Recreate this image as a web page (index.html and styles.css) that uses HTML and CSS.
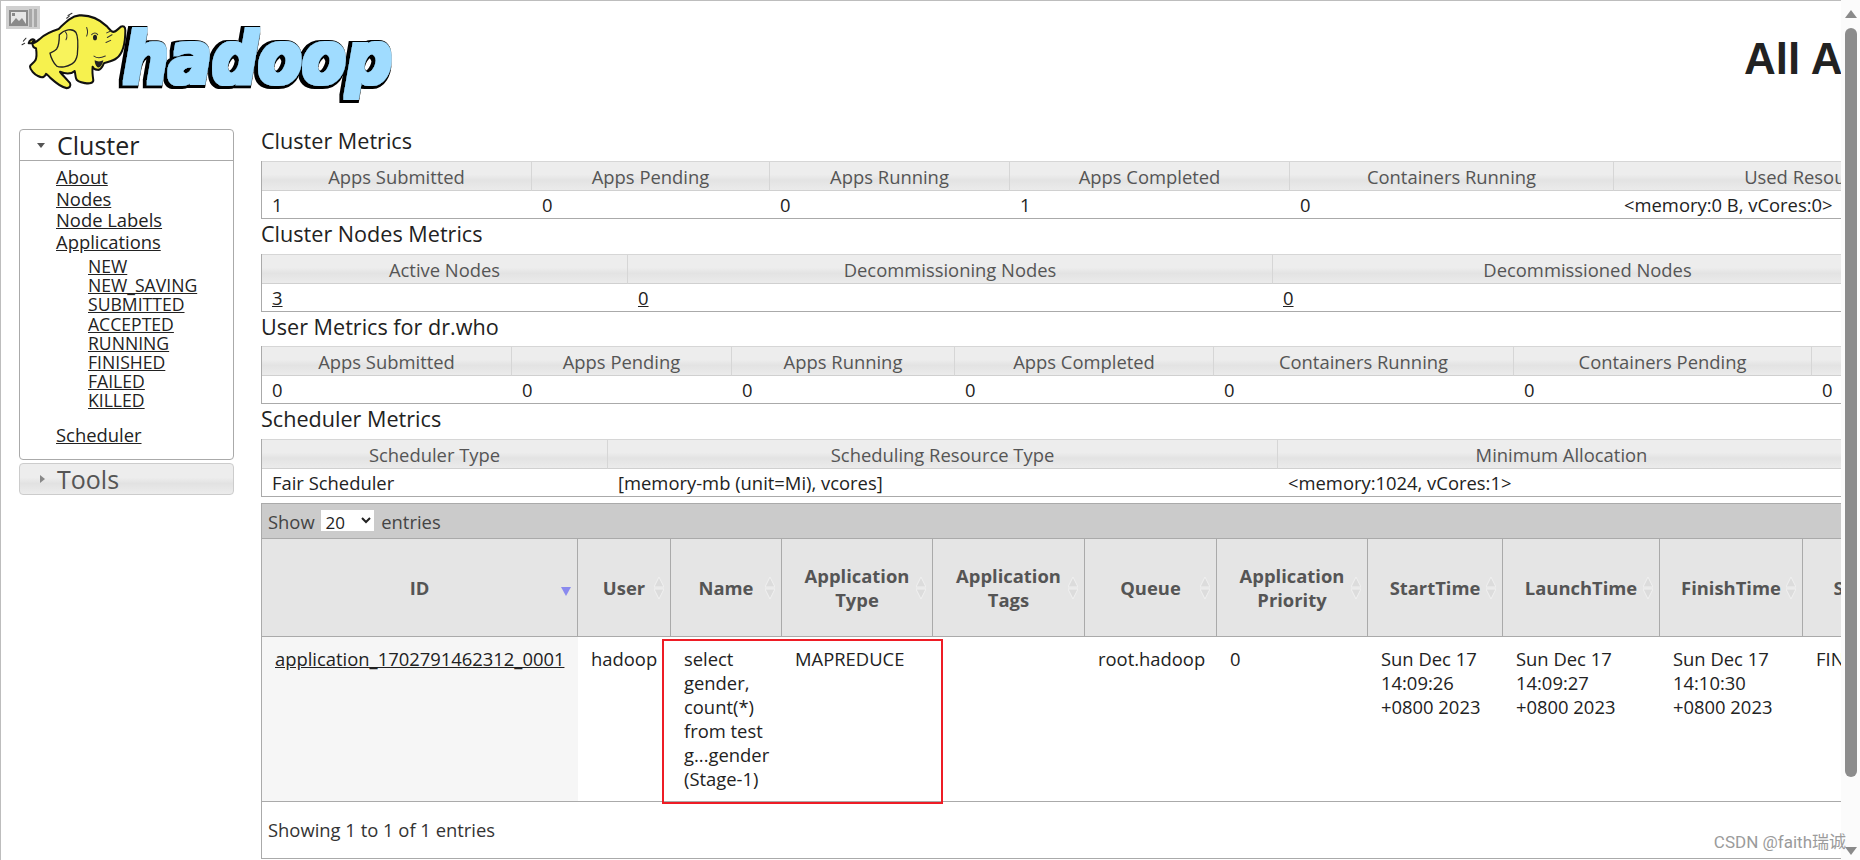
FILE: index.html
```html
<!DOCTYPE html>
<html lang="en">
<head>
<meta charset="utf-8">
<title>All Applications</title>
<link rel="stylesheet" href="styles.css">
</head>
<body>
<div class="window">
  <div class="content">
    <header class="banner">
      <svg class="logo" viewBox="0 0 420 110" role="img" aria-label="Hadoop logo">
        <defs>
          <filter id="blocky" x="-5%" y="-20%" width="110%" height="140%">
            <feMorphology in="SourceGraphic" operator="dilate" radius="5" result="fat"/>
            <feMorphology in="SourceAlpha" operator="dilate" radius="11" result="wide"/>
            <feOffset in="wide" dx="-5" dy="4" result="shift"/>
            <feMerge>
              <feMergeNode in="shift"/>
              <feMergeNode in="fat"/>
            </feMerge>
          </filter>
        </defs>
        <g transform="scale(0.3333)">
          <g transform="translate(0 -3) scale(1 1.07)">
            <path class="ele-line" d="M70 118l8-8M66 128l8-4M204 46l12-6M200 54l8-6" />
            <path class="ele-body" d="M86 124c2-10 12-14 18-8c-4 2-8 4-8 8c8 2 16-6 26-14c14-12 34-20 54-26c18-16 36-36 62-38c34-2 62 12 82 30c8 8 12 14 18 16c8 2 16-8 24-14c8-4 14 0 14 10c0 30-4 62-26 78c-10 8-24 10-38 14c-6 14-12 22-22 18c-6 0-10-4-12-8c-2 14 0 26 2 38c0 8-12 10-24 8c-12-2-26-4-28-14c-2-6-2-14-4-20c-10 8-28 8-44 2c6 8 22 22 30 32c4 8-2 14-10 14c-16-2-34-16-48-28c-6-6-10-10-14-12c-4 10-12 12-24 6c-10-4-24-18-24-26c0-8 12-10 16-18c6-10 4-22 2-34c-6 0-12-6-10-14z" />
            <path class="ele-ear" d="M178 100c14-14 40-20 50-6c8 12 6 40 4 62c-2 12-6 20-16 26c-14 8-34 12-46 6c-8-6-18-24-20-36c8-4 14-6 20-12c6-8 8-24 8-40z" />
            <path class="ele-line" d="M260 80c4 10 4 16 0 24M275 100c6-6 14-6 18 0M320 95l14-6M322 108l14-8M318 122l14-6M282 160c8 6 20 6 34 0M196 92c6 6 6 14 2 22" />
            <ellipse class="ele-eye" cx="285" cy="108" rx="6" ry="8" />
            <path class="ele-eye" d="M284 172c8 4 18 4 26 0c-2 12-10 22-16 20c-6-2-10-12-10-20z" />
          </g>
          <text class="wordmark" x="368" y="250" textLength="808" lengthAdjust="spacingAndGlyphs" filter="url(#blocky)">hadoop</text>
        </g>
      </svg>
      <h1 class="page-title">All Applications</h1>
    </header>

    <div class="columns">
      <nav class="sidebar">
        <section class="acc acc-open">
          <h3 class="acc-head"><span class="tri-down"></span>Cluster</h3>
          <div class="acc-body">
            <ul class="nav-main">
              <li><a href="#">About</a></li>
              <li><a href="#">Nodes</a></li>
              <li><a href="#">Node Labels</a></li>
              <li><a href="#">Applications</a>
                <ul class="nav-sub">
                  <li><a href="#">NEW</a></li>
                  <li><a href="#">NEW_SAVING</a></li>
                  <li><a href="#">SUBMITTED</a></li>
                  <li><a href="#">ACCEPTED</a></li>
                  <li><a href="#">RUNNING</a></li>
                  <li><a href="#">FINISHED</a></li>
                  <li><a href="#">FAILED</a></li>
                  <li><a href="#">KILLED</a></li>
                </ul>
              </li>
              <li class="nav-last"><a href="#">Scheduler</a></li>
            </ul>
          </div>
        </section>
        <section class="acc acc-closed">
          <h3 class="acc-head"><span class="tri-right"></span>Tools</h3>
        </section>
      </nav>

      <main class="main">
        <h2 class="metric-title">Cluster Metrics</h2>
        <table class="metrics">
          <colgroup><col class="w270"><col class="w238"><col class="w240"><col class="w280"><col class="w324"><col class="w398"><col></colgroup>
          <thead><tr><th>Apps Submitted</th><th>Apps Pending</th><th>Apps Running</th><th>Apps Completed</th><th>Containers Running</th><th>Used Resources</th><th>Total Resources</th></tr></thead>
          <tbody><tr><td>1</td><td>0</td><td>0</td><td>1</td><td>0</td><td>&lt;memory:0 B, vCores:0&gt;</td><td>&lt;memory:0 B, vCores:0&gt;</td></tr></tbody>
        </table>

        <h2 class="metric-title">Cluster Nodes Metrics</h2>
        <table class="metrics">
          <colgroup><col class="w366"><col class="w645"><col class="w630"><col></colgroup>
          <thead><tr><th>Active Nodes</th><th>Decommissioning Nodes</th><th>Decommissioned Nodes</th><th>Lost Nodes</th></tr></thead>
          <tbody><tr><td><a href="#">3</a></td><td><a href="#">0</a></td><td><a href="#">0</a></td><td><a href="#">0</a></td></tr></tbody>
        </table>

        <h2 class="metric-title metric-title-tight">User Metrics for dr.who</h2>
        <table class="metrics">
          <colgroup><col class="w250"><col class="w220"><col class="w223"><col class="w259"><col class="w300"><col class="w298"><col></colgroup>
          <thead><tr><th>Apps Submitted</th><th>Apps Pending</th><th>Apps Running</th><th>Apps Completed</th><th>Containers Running</th><th>Containers Pending</th><th>Containers Reserved</th></tr></thead>
          <tbody><tr><td>0</td><td>0</td><td>0</td><td>0</td><td>0</td><td>0</td><td>0</td></tr></tbody>
        </table>

        <h2 class="metric-title">Scheduler Metrics</h2>
        <table class="metrics">
          <colgroup><col class="w346"><col class="w670"><col class="w568"><col></colgroup>
          <thead><tr><th>Scheduler Type</th><th>Scheduling Resource Type</th><th>Minimum Allocation</th><th>Maximum Allocation</th></tr></thead>
          <tbody><tr><td>Fair Scheduler</td><td>[memory-mb (unit=Mi), vcores]</td><td>&lt;memory:1024, vCores:1&gt;</td><td>&lt;memory:8192, vCores:4&gt;</td></tr></tbody>
        </table>

        <section class="apps">
          <div class="apps-toolbar">
            <label class="entries">Show
              <select class="entries-select"><option>20</option><option>40</option></select>
              entries</label>
          </div>
          <table class="apps-table">
            <colgroup><col class="w316"><col class="w93"><col class="w111"><col class="w151"><col class="w152"><col class="w132"><col class="w151"><col class="w135"><col class="w157"><col class="w143"><col class="w110"></colgroup>
            <thead>
              <tr>
                <th>ID<span class="sort-active"></span></th>
                <th>User<svg class="sort" viewBox="0 0 10 22"><path d="M5 0l5 10H0zM5 22l5-10H0z"/></svg></th>
                <th>Name<svg class="sort" viewBox="0 0 10 22"><path d="M5 0l5 10H0zM5 22l5-10H0z"/></svg></th>
                <th>Application<br>Type<svg class="sort" viewBox="0 0 10 22"><path d="M5 0l5 10H0zM5 22l5-10H0z"/></svg></th>
                <th>Application<br>Tags<svg class="sort" viewBox="0 0 10 22"><path d="M5 0l5 10H0zM5 22l5-10H0z"/></svg></th>
                <th>Queue<svg class="sort" viewBox="0 0 10 22"><path d="M5 0l5 10H0zM5 22l5-10H0z"/></svg></th>
                <th>Application<br>Priority<svg class="sort" viewBox="0 0 10 22"><path d="M5 0l5 10H0zM5 22l5-10H0z"/></svg></th>
                <th>StartTime<svg class="sort" viewBox="0 0 10 22"><path d="M5 0l5 10H0zM5 22l5-10H0z"/></svg></th>
                <th>LaunchTime<svg class="sort" viewBox="0 0 10 22"><path d="M5 0l5 10H0zM5 22l5-10H0z"/></svg></th>
                <th>FinishTime<svg class="sort" viewBox="0 0 10 22"><path d="M5 0l5 10H0zM5 22l5-10H0z"/></svg></th>
                <th>State</th>
              </tr>
            </thead>
            <tbody>
              <tr>
                <td class="sorted"><a href="#">application_1702791462312_0001</a></td>
                <td>hadoop</td>
                <td>select<br>gender,<br>count(*)<br>from test<br>g...gender<br>(Stage-1)</td>
                <td>MAPREDUCE</td>
                <td></td>
                <td>root.hadoop</td>
                <td>0</td>
                <td>Sun Dec 17<br>14:09:26<br>+0800 2023</td>
                <td>Sun Dec 17<br>14:09:27<br>+0800 2023</td>
                <td>Sun Dec 17<br>14:10:30<br>+0800 2023</td>
                <td>FINISHED</td>
              </tr>
            </tbody>
          </table>
          <div class="apps-footer">Showing 1 to 1 of 1 entries</div>
          <div class="highlight"></div>
        </section>
      </main>
    </div>
  </div>

  <aside class="scrollbar">
    <span class="arrow-up"></span>
    <span class="thumb"></span>
    <span class="arrow-down"></span>
  </aside>

  <div class="viewer-badge">
    <svg viewBox="0 0 34 23" class="viewer-icon">
      <rect x="3" y="4" width="19" height="16" fill="#8a8a8a"/>
      <rect x="5" y="6" width="15" height="12" fill="#e6e6e6"/>
      <path d="M5 18l5-6 3 3 3-3 4 6z" fill="#8a8a8a"/>
      <rect x="6" y="7" width="3" height="3" fill="#8a8a8a"/>
      <rect x="23" y="3" width="3" height="18" fill="#a8a8a8"/>
      <rect x="28" y="3" width="3" height="18" fill="#a8a8a8"/>
    </svg>
  </div>
  <div class="watermark">CSDN @faith瑞诚</div>
</div>
</body>
</html>
```

FILE: styles.css
```css
* { box-sizing: border-box; }
html, body { margin: 0; padding: 0; height: 100%; overflow: hidden; background: #fff; }
body { font-family: "Open Sans", "Noto Sans", sans-serif; color: #222; }
a { color: #222; }

.window { position: relative; display: flex; width: 1860px; height: 860px; overflow: hidden; }
.content { width: 1841px; height: 860px; overflow: hidden; border-top: 1px solid #bdbdbd; border-left: 1px solid #bdbdbd; }

/* banner */
.banner { display: flex; align-items: flex-start; height: 125px; }
.logo { width: 420px; height: 110px; flex: none; margin: -1px 0 0 -1px; }
.ele-body { fill: #f6f14e; stroke: #111; stroke-width: 6; stroke-linejoin: round; }
.ele-ear { fill: #f8f35c; stroke: #222; stroke-width: 4; }
.ele-line { fill: none; stroke: #333; stroke-width: 3; stroke-linecap: round; }
.ele-eye { fill: #222; }
.wordmark { font-family: "DejaVu Sans", sans-serif; font-weight: 700; font-style: italic; font-size: 212px; fill: #a0dcff; }
.page-title { margin: 32px 0 0 1324px; font-family: "Liberation Sans", sans-serif; font-size: 44px; line-height: 52px; font-weight: 700; white-space: nowrap; color: #222; }

/* columns */
.columns { display: flex; align-items: flex-start; }
.sidebar { flex: none; width: 215px; margin: 3px 0 0 18px; display: flex; flex-direction: column; gap: 3px; }
.main { flex: none; width: 1580px; margin-left: 27px; }

.acc { border: 1px solid #aaa; border-radius: 4px; }
.acc-head { display: flex; align-items: center; margin: 0; height: 30px; font-size: 25px; font-weight: 400; padding-left: 17px; line-height: 30px; color: #222; }
.acc-open .acc-head { border-bottom: 1px solid #aaa; height: 31px; }
.acc-closed { height: 32px; border-color: #ccc; background: linear-gradient(#ededed 45%, #e2e2e2 65%, #ececec); }
.acc-closed .acc-head { color: #555; }
.tri-down { width: 0; height: 0; margin-right: 12px; border-left: 4.5px solid transparent; border-right: 4.5px solid transparent; border-top: 5px solid #555; }
.tri-right { width: 0; height: 0; margin: 0 12px 0 3px; border-top: 4.5px solid transparent; border-bottom: 4.5px solid transparent; border-left: 5px solid #888; }
.acc-body { height: 298px; padding: 5px 0 0 36px; }
.nav-main, .nav-sub { list-style: none; margin: 0; padding: 0; }
.nav-main { font-size: 18.4px; line-height: 21.5px; }
.nav-sub { font-size: 17.6px; line-height: 19.2px; margin: 5px 0 0 32px; }
.nav-last { margin-top: 13px; }

/* metric tables */
.metric-title { margin: 0 0 5px; font-size: 21.6px; line-height: 30px; font-weight: 400; color: #222; }
.metric-title-tight { margin-bottom: 4px; }
.metrics { table-layout: fixed; width: 2500px; border-collapse: separate; border-spacing: 0; font-size: 18.4px; border-left: 1px solid #aaa; }
.metrics th { height: 30px; padding: 0; font-weight: 400; color: #555; text-align: center; white-space: nowrap; border-top: 1px solid #d6d6d6; border-right: 1px solid #d6d6d6; border-bottom: 1px solid #d0d0d0; background: linear-gradient(#ededed 45%, #e3e3e3 65%, #ebebeb); }
.metrics td { height: 28px; padding: 0 0 0 10px; line-height: 26px; color: #222; white-space: nowrap; border-bottom: 1px solid #aaa; }

.w93 { width: 93px; } .w110 { width: 110px; } .w111 { width: 111px; } .w132 { width: 132px; } .w135 { width: 135px; }
.w143 { width: 143px; } .w151 { width: 151px; } .w152 { width: 152px; } .w157 { width: 157px; }
.w220 { width: 220px; } .w223 { width: 223px; } .w238 { width: 238px; } .w240 { width: 240px; } .w250 { width: 250px; }
.w259 { width: 259px; } .w270 { width: 270px; } .w280 { width: 280px; } .w298 { width: 298px; } .w300 { width: 300px; }
.w316 { width: 316px; } .w324 { width: 324px; } .w346 { width: 346px; } .w366 { width: 366px; } .w398 { width: 398px; }
.w568 { width: 568px; } .w630 { width: 630px; } .w645 { width: 645px; } .w670 { width: 670px; }

/* applications table */
.apps { position: relative; width: 1601px; margin-top: 6px; border-top: 1px solid #aaa; border-left: 1px solid #aaa; border-bottom: 1px solid #aaa; }
.apps-toolbar { height: 35px; padding-left: 6px; background: #cbcbcb; border-bottom: 1px solid #aaa; display: flex; align-items: center; font-size: 18.4px; color: #444; }
.entries-select { width: 53px; height: 21px; margin: 0 2px; padding: 0; border: 0; background: #fff; font: inherit; font-size: 17px; color: #222; }
.apps-table { table-layout: fixed; width: 1601px; border-collapse: separate; border-spacing: 0; font-size: 18.4px; }
.apps-table th { position: relative; height: 98px; padding: 0; font-weight: 700; line-height: 24px; color: #555; background: #e5e5e5; text-align: center; border-right: 1px solid #aaa; border-bottom: 1px solid #aaa; }
.apps-table td { padding: 10px 13px; vertical-align: top; line-height: 24px; color: #222; border-bottom: 1px solid #aaa; white-space: nowrap; }
.apps-table td.sorted { background: #f6f6f6; padding-left: 13px; }
.sort { position: absolute; right: 6px; top: 38px; width: 10px; height: 22px; }
.sort path { fill: #dcdcdc; stroke: #f0f0f0; stroke-width: 1; }
.sort-active { position: absolute; right: 6px; top: 48px; width: 0; height: 0; border-left: 5px solid transparent; border-right: 5px solid transparent; border-top: 9px solid #8a8aee; }
.apps-footer { height: 56px; padding-left: 6px; line-height: 56px; font-size: 18.4px; color: #333; }
.highlight { position: absolute; left: 400px; top: 135px; width: 281px; height: 165px; border: 2px solid #ee1c25; }

/* overlays */
.scrollbar { width: 19px; height: 860px; background: #fbfbfb; display: flex; flex-direction: column; align-items: center; padding: 10px 0 5px 1px; }
.arrow-up { width: 0; height: 0; border-left: 6px solid transparent; border-right: 6px solid transparent; border-bottom: 8px solid #8a8a8a; }
.thumb { width: 12px; height: 749px; margin: 10px 0 auto; background: #8c8c8c; border-radius: 6px; }
.arrow-down { width: 0; height: 0; border-left: 6px solid transparent; border-right: 6px solid transparent; border-top: 8px solid #8a8a8a; }
.viewer-badge { position: absolute; left: 6px; top: 6px; width: 34px; height: 23px; background: rgba(200,200,200,.85); }
.viewer-icon { display: block; width: 34px; height: 23px; }
.watermark { position: absolute; right: 14px; top: 831px; font-family: "Roboto", "Noto Sans CJK SC", sans-serif; font-size: 17px; line-height: 22px; color: #9b9b9b; white-space: nowrap; }
```
